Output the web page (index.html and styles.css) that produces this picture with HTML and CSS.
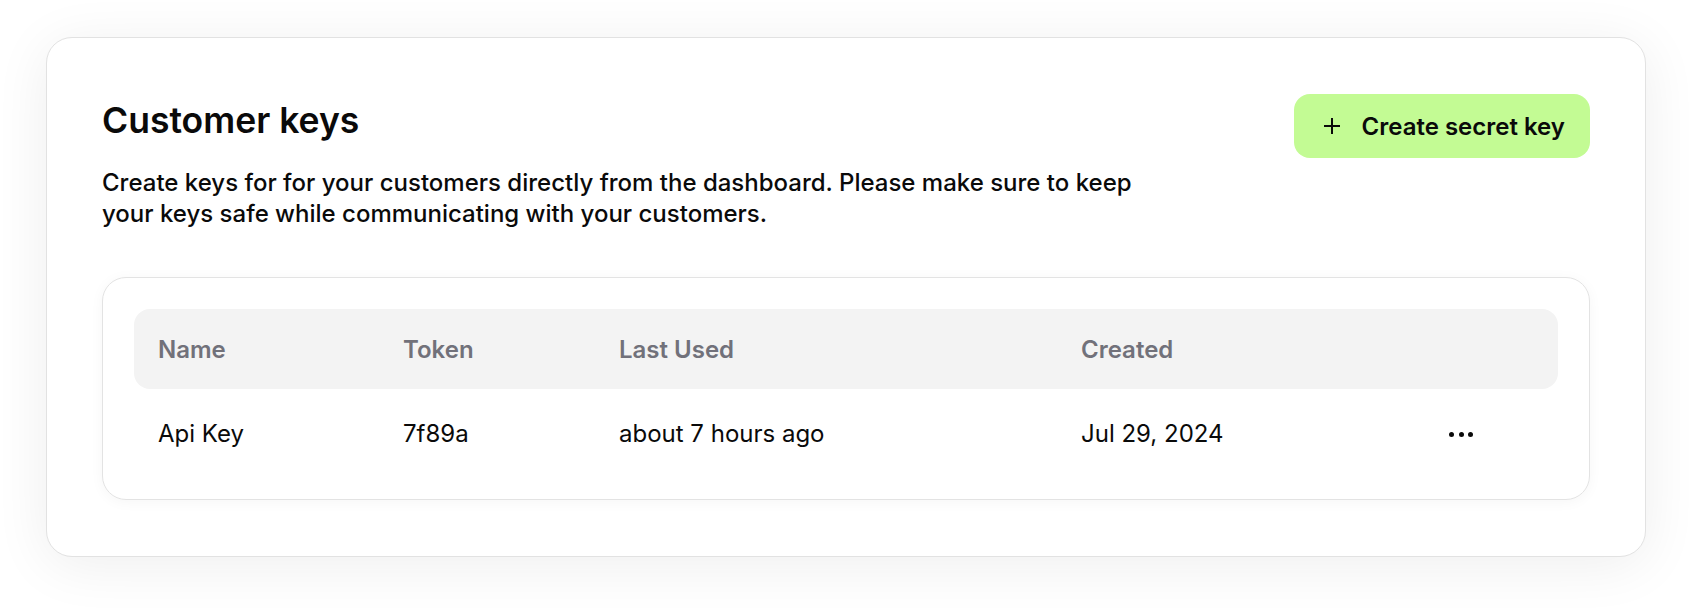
FILE: index.html
```html
<!DOCTYPE html>
<html lang="en">
<head>
<meta charset="utf-8">
<title>Customer keys</title>
<link rel="stylesheet" href="styles.css">
</head>
<body>
  <section class="card">
    <header class="card-head">
      <div class="intro">
        <h1 class="title">Customer keys</h1>
        <p class="desc">Create keys for for your customers directly from the dashboard. Please make sure to keep your keys safe while communicating with your customers.</p>
      </div>
      <button class="btn-create" type="button">
        <svg class="plus" viewBox="0 0 20 20" width="20" height="20" aria-hidden="true">
          <path d="M10 2v16M2 10h16" stroke="#0a0a0a" stroke-width="2" fill="none" stroke-linecap="butt"/>
        </svg>
        <span>Create secret key</span>
      </button>
    </header>

    <div class="table-wrap">
      <div class="row head">
        <div class="cell">Name</div>
        <div class="cell">Token</div>
        <div class="cell">Last Used</div>
        <div class="cell">Created</div>
        <div class="cell"></div>
      </div>
      <div class="row body">
        <div class="cell">Api Key</div>
        <div class="cell">7f89a</div>
        <div class="cell">about 7 hours ago</div>
        <div class="cell">Jul 29, 2024</div>
        <div class="cell">
          <span class="dots" aria-label="More actions"><i></i><i></i><i></i></span>
        </div>
      </div>
    </div>
  </section>
</body>
</html>
```

FILE: styles.css
```css
* { box-sizing: border-box; }

html, body {
  margin: 0;
  background: #ffffff;
}

body {
  min-height: 612px;
  padding: 37px 46px 0;
  font-family: Inter, "Noto Sans", "Liberation Sans", sans-serif;
  color: #0a0a0a;
}

.card {
  width: 1600px;
  background: #ffffff;
  border: 1px solid #e2e2e2;
  border-radius: 26px;
  padding: 55px 55px 56px;
  box-shadow: 0 8px 56px rgba(0, 0, 0, 0.07);
}

.card-head {
  display: flex;
  justify-content: space-between;
  align-items: flex-start;
}

.intro {
  max-width: 1060px;
}

.title {
  margin: 6px 0 0;
  font-size: 35.5px;
  line-height: 44px;
  font-weight: 600;
  color: #0a0a0a;
}

.desc {
  margin: 24px 0 0;
  font-size: 24px;
  line-height: 31px;
  font-weight: 500;
  color: #0a0a0a;
}

.btn-create {
  display: flex;
  align-items: center;
  gap: 20px;
  height: 64px;
  margin-top: 1px;
  padding: 0 25px 0 28px;
  border: none;
  border-radius: 16px;
  background: #c3fb94;
  font-family: inherit;
  font-size: 24px;
  font-weight: 600;
  color: #0a0a0a;
  cursor: pointer;
}

.plus { display: block; flex: none; }

.table-wrap {
  margin-top: 48px;
  border: 1px solid #e3e3e3;
  border-radius: 24px;
  padding: 31px 31px 22px;
  box-shadow: 0 2px 14px rgba(0, 0, 0, 0.04);
}

.row {
  display: grid;
  grid-template-columns: 245px 216px 462px 368px 1fr;
  align-items: center;
}

.row.head {
  height: 80px;
  background: #f3f3f3;
  border-radius: 16px;
  font-size: 24px;
  font-weight: 600;
  color: #71717a;
}

.row.body {
  height: 88px;
  font-size: 24px;
  font-weight: 400;
  color: #0a0a0a;
}

.cell {
  padding-left: 24px;
  white-space: nowrap;
}

.dots {
  display: inline-flex;
  gap: 4.5px;
  align-items: center;
  vertical-align: middle;
}

.dots i {
  display: block;
  width: 5px;
  height: 5px;
  border-radius: 50%;
  background: #0a0a0a;
}
```
